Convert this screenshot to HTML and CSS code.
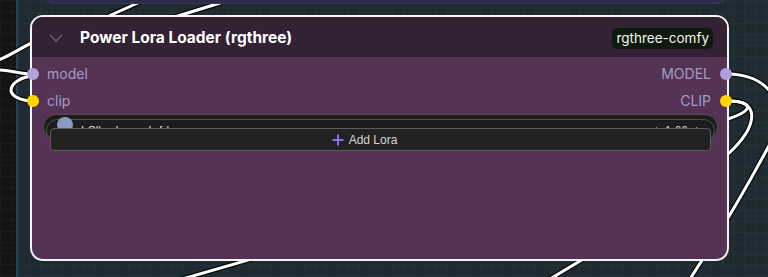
FILE: index.html
```html
<!DOCTYPE html>
<html>
<head>
<meta charset="utf-8">
<link rel="stylesheet" href="styles.css">
</head>
<body>
<div class="canvas">
  <div class="group"></div>
  <svg class="wires" width="768" height="277" viewBox="0 0 768 277">
    <g class="outline">
      <path d="M100,20 L140,2"/>
      <path d="M165,20 L220,3"/>
      <path d="M-2,60 C 10,56 20,48 34,42"/>
      <path d="M-2,70 C 12,70 20,74 30,74"/>
      <path d="M30,76 C 10,80 0,97 30,101"/>
      <path d="M727,74 C 765,74 790,100 772,140 Q 735,210 688,282"/>
      <path d="M727,101 C 752,101 756,110 728,119"/>
      <path d="M727,101 C 760,99 760,125 727,155"/>
      <path d="M590,255 L545,282"/>
      <path d="M262,256 L172,282"/>
    </g>
    <g class="line">
      <path d="M100,20 L140,2"/>
      <path d="M165,20 L220,3"/>
      <path d="M-2,60 C 10,56 20,48 34,42"/>
      <path d="M-2,70 C 12,70 20,74 30,74"/>
      <path d="M30,76 C 10,80 0,97 30,101"/>
      <path d="M727,74 C 765,74 790,100 772,140 Q 735,210 688,282"/>
      <path d="M727,101 C 752,101 756,110 728,119"/>
      <path d="M727,101 C 760,99 760,125 727,155"/>
      <path d="M590,255 L545,282"/>
      <path d="M262,256 L172,282"/>
    </g>
  </svg>
  <div class="node node-top"></div>
  <div class="node node-main">
    <div class="title-bar">
      <svg class="chevron" width="14" height="8" viewBox="0 0 14 8"><polyline points="1,1 7,7 13,1"/></svg>
      <span class="title">Power Lora Loader (rgthree)</span>
      <span class="badge">rgthree-comfy</span>
    </div>
    <div class="content">
      <div class="slot-row">
        <span class="dot dot-in dot-model"></span>
        <span class="label">model</span>
        <span class="spacer"></span>
        <span class="label">MODEL</span>
        <span class="dot dot-out dot-model"></span>
      </div>
      <div class="slot-row">
        <span class="dot dot-in dot-clip"></span>
        <span class="label">clip</span>
        <span class="spacer"></span>
        <span class="label">CLIP</span>
        <span class="dot dot-out dot-clip"></span>
      </div>
      <div class="widgets">
        <div class="pill pill-a"></div>
        <div class="pill pill-b">
          <span class="toggle"></span>
          <span class="lora-name">LSlbud-epoch-fd</span>
          <span class="spacer"></span>
          <span class="strength"><span class="tri tri-left"></span><span class="value">1.00</span><span class="tri tri-right"></span></span>
        </div>
        <div class="add-lora">
          <svg class="plus" width="12" height="12" viewBox="0 0 12 12"><path d="M6,0.5 V11.5 M0.5,6 H11.5"/></svg>
          <span>Add Lora</span>
        </div>
      </div>
    </div>
  </div>
</div>
</body>
</html>
```
FILE: styles.css
```css
* { box-sizing: border-box; }
html, body {
  margin: 0;
  padding: 0;
  width: 768px;
  height: 277px;
  overflow: hidden;
}
body {
  background-color: #151515;
  background-image:
    linear-gradient(to right, #1c1c1c 1px, transparent 1px),
    linear-gradient(to bottom, #1c1c1c 1px, transparent 1px);
  background-size: 11px 11px;
  font-family: Inter, "Liberation Sans", Arial, sans-serif;
}
.canvas {
  position: relative;
  width: 768px;
  height: 277px;
}
.group {
  position: absolute;
  left: 16px;
  top: -10px;
  right: -10px;
  bottom: -10px;
  background-color: #1f2a31;
  background-image:
    linear-gradient(to right, #25313a 1px, transparent 1px),
    linear-gradient(to bottom, #25313a 1px, transparent 1px);
  background-size: 11px 11px;
  border-left: 2px solid #22445a;
}
.wires {
  position: absolute;
  left: 0;
  top: 0;
}
.wires path { fill: none; stroke-linecap: round; }
.wires .outline path { stroke: #0a0a0a; stroke-width: 5.5; }
.wires .line path { stroke: #ffffff; stroke-width: 3; }

.node { position: absolute; }
.node-top {
  left: 43px;
  top: -31px;
  width: 685px;
  height: 35px;
  background: #2b2c49;
  border: 1px solid #3a3b5a;
  border-radius: 12px;
}
.node-main {
  left: 30px;
  top: 15px;
  width: 699px;
  height: 246px;
  background: #553355;
  border: 2px solid #f4f4f4;
  border-radius: 13px;
  display: flex;
  flex-direction: column;
}
.title-bar {
  height: 40px;
  flex: none;
  background: #332233;
  border-radius: 11px 11px 0 0;
  display: flex;
  align-items: center;
  padding: 0 14px 0 17px;
}
.chevron {
  flex: none;
  margin-top: 2px;
}
.chevron polyline {
  fill: none;
  stroke: #5e5d7a;
  stroke-width: 1.5;
}
.title {
  margin-left: 17px;
  color: #ffffff;
  font-weight: 700;
  font-size: 15.5px;
  flex: 1;
  margin-top: 1px;
}
.badge {
  background: #0e1a0e;
  color: #f6f6ee;
  font-size: 13.5px;
  height: 21px;
  line-height: 21px;
  padding: 0 4px;
  border-radius: 5px;
  margin-top: 2px;
}
.content {
  padding-top: 3px;
  display: flex;
  flex-direction: column;
}
.slot-row {
  height: 27px;
  display: flex;
  align-items: center;
}
.dot {
  width: 12px;
  height: 12px;
  border-radius: 50%;
  flex: none;
}
.dot-in { margin-left: -5px; margin-right: 8px; }
.dot-out { margin-right: -5px; margin-left: 9px; }
.dot-model { background: #b19fdb; }
.dot-clip { background: #ffd500; }
.label {
  color: #a09cc8;
  font-size: 14px;
}
.spacer { flex: 1; }
.widgets {
  margin: 0 9px 0 11px;
  display: flex;
  flex-direction: column;
}
.pill {
  background: #1c1c1c;
  border: 1px solid #4e4e4e;
  border-radius: 13px;
}
.pill-a {
  height: 26px;
}
.pill-b {
  height: 23px;
  margin: -21px 3px 0 3px;
  display: flex;
  align-items: flex-start;
  padding: 0 10px 0 10px;
}
.toggle {
  width: 16px;
  height: 16px;
  border-radius: 50%;
  background: #8a9bc3;
  margin-top: -3px;
  flex: none;
}
.lora-name {
  margin-left: 8px;
  color: #dddddd;
  font-family: "Liberation Sans", Arial, sans-serif;
  font-size: 12px;
  line-height: 12px;
  margin-top: 5px;
}
.strength {
  color: #cccccc;
  font-family: "Liberation Sans", Arial, sans-serif;
  font-size: 12px;
  line-height: 12px;
  margin-top: 5px;
  display: flex;
  align-items: center;
  gap: 8px;
  margin-right: 1px;
}
.tri {
  width: 0;
  height: 0;
  border-top: 4px solid transparent;
  border-bottom: 4px solid transparent;
}
.tri-left { border-right: 7px solid #bbbbbb; }
.tri-right { border-left: 7px solid #bbbbbb; }
.add-lora {
  height: 23px;
  margin: -14px 7px 0 7px;
  background: #222222;
  border: 1px solid #5c5c5c;
  border-radius: 4px;
  display: flex;
  align-items: center;
  justify-content: center;
  padding-right: 32px;
  color: #d6d6d6;
  font-family: "Liberation Sans", Arial, sans-serif;
  font-size: 12px;
  position: relative;
}
.plus {
  flex: none;
  margin-right: 5px;
}
.plus path {
  stroke: #8c6fe0;
  stroke-width: 2;
  fill: none;
}
```
